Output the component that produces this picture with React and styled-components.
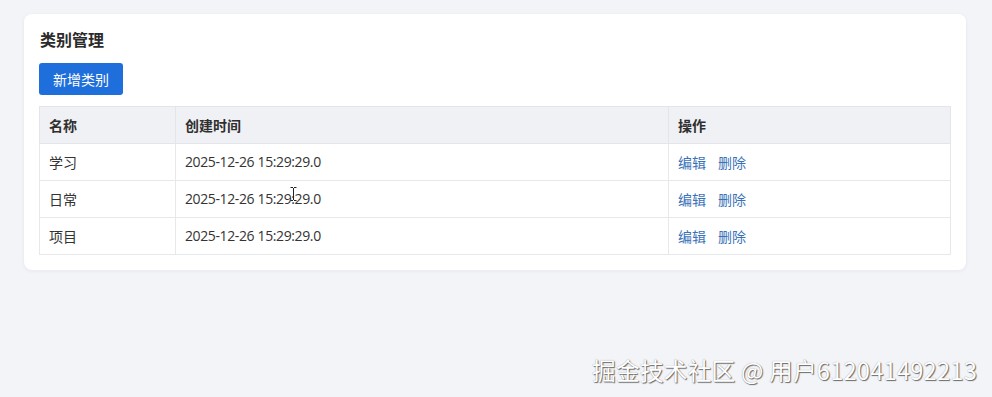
import React from "react";
import styled, { createGlobalStyle } from "styled-components";

const Global = createGlobalStyle`
  html, body { margin: 0; padding: 0; }
  body {
    background: #f3f4f8;
    font-family: "Open Sans", "Noto Sans CJK SC", sans-serif;
    color: #333;
  }
`;

const Page = styled.div`
  position: relative;
  width: 992px;
  height: 397px;
  box-sizing: border-box;
  padding: 14px 26px 0 24px;
  overflow: hidden;
`;

const Card = styled.div`
  background: #fff;
  border-radius: 8px;
  box-shadow: 0 1px 4px rgba(20, 30, 60, 0.06);
  padding: 13px 15px 15px 15px;
  display: flex;
  flex-direction: column;
  align-items: flex-start;
`;

const Title = styled.h2`
  margin: 0 0 12px 1px;
  font-size: 16px;
  line-height: 24px;
  font-weight: 700;
  color: #2b2b2b;
  font-family: "Noto Sans CJK SC", sans-serif;
`;

const PrimaryButton = styled.button`
  height: 32px;
  padding: 0 14px;
  border: none;
  border-radius: 3px;
  background: #1e6fdb;
  color: #fff;
  font-size: 14px;
  font-family: "Noto Sans CJK SC", sans-serif;
  margin-bottom: 11px;
  cursor: pointer;
`;

const Table = styled.table`
  width: 911px;
  border-collapse: collapse;
  border: 1px solid #e3e5ea;
  table-layout: fixed;
  font-size: 14px;
`;

const Col = styled.col`
  width: ${(p) => p.$w}px;
`;

const HeadCell = styled.th`
  background: #f0f1f4;
  text-align: left;
  font-weight: 700;
  color: #2f2f2f;
  padding: 8px 9px;
  line-height: 20px;
  border: 1px solid #e3e5ea;
  font-family: "Noto Sans CJK SC", sans-serif;
`;

const Cell = styled.td`
  padding: 8px 9px;
  line-height: 20px;
  border: 1px solid #e6e8ec;
  color: #333;
  font-family: ${(p) =>
    p.$mono ? `"Open Sans", "Noto Sans CJK SC", sans-serif` : `"Noto Sans CJK SC", sans-serif`};
  letter-spacing: ${(p) => (p.$mono ? "-0.38px" : "0")};
  position: relative;
`;

const Actions = styled.div`
  display: flex;
  gap: 12px;
`;

const LinkButton = styled.a`
  color: #3a72b8;
  font-family: "Noto Sans CJK SC", sans-serif;
  text-decoration: none;
  cursor: pointer;
`;

const Cursor = styled.svg`
  position: absolute;
  left: 114px;
  top: 6px;
`;

const Watermark = styled.div`
  position: absolute;
  right: 15px;
  bottom: 12px;
  font-size: 23.7px;
  line-height: 30px;
  color: #fff;
  font-family: "Noto Sans CJK SC", sans-serif;
  text-shadow: 1px 1px 1px rgba(0, 0, 0, 0.55), 0 0 1px rgba(0, 0, 0, 0.4);
  letter-spacing: 0.2px;
`;

const rows = [
  { name: "学习", time: "2025-12-26 15:29:29.0" },
  { name: "日常", time: "2025-12-26 15:29:29.0", cursor: true },
  { name: "项目", time: "2025-12-26 15:29:29.0" },
];

export default function App() {
  return (
    <>
      <Global />
      <Page>
        <Card>
          <Title>类别管理</Title>
          <PrimaryButton>新增类别</PrimaryButton>
          <Table>
            <colgroup>
              <Col $w={136} />
              <Col $w={493} />
              <Col $w={282} />
            </colgroup>
            <thead>
              <tr>
                <HeadCell>名称</HeadCell>
                <HeadCell>创建时间</HeadCell>
                <HeadCell>操作</HeadCell>
              </tr>
            </thead>
            <tbody>
              {rows.map((r) => (
                <tr key={r.name}>
                  <Cell>{r.name}</Cell>
                  <Cell $mono>
                    {r.time}
                    {r.cursor && (
                      <Cursor width="7" height="14" viewBox="0 0 7 14">
                        <path
                          d="M0.5 0.5h2.5M4 0.5h2.5M3.5 1v12M0.5 13.5h2.5M4 13.5h2.5"
                          stroke="#222"
                          strokeWidth="1"
                          fill="none"
                        />
                      </Cursor>
                    )}
                  </Cell>
                  <Cell>
                    <Actions>
                      <LinkButton>编辑</LinkButton>
                      <LinkButton>删除</LinkButton>
                    </Actions>
                  </Cell>
                </tr>
              ))}
            </tbody>
          </Table>
        </Card>
        <Watermark>掘金技术社区 @ 用户612041492213</Watermark>
      </Page>
    </>
  );
}
